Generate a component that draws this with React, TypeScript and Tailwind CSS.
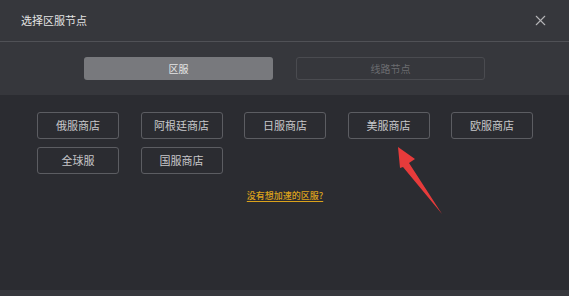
import { X } from 'lucide-react';

const regions = ['俄服商店', '阿根廷商店', '日服商店', '美服商店', '欧服商店', '全球服', '国服商店'];

export default function App() {
  return (
    <div
      className="relative w-[569px] h-[296px] flex flex-col bg-[#2b2c31] overflow-hidden"
      style={{ fontFamily: '"Noto Sans CJK SC", "Noto Sans", sans-serif' }}
    >
      {/* Header */}
      <div className="h-[42px] flex items-center justify-between pl-[21px] pr-[20px] bg-[#36373c] border-b border-[#505156]">
        <span className="text-[11px] text-[#e4e4e4]">选择区服节点</span>
        <X className="w-[17px] h-[17px] text-[#b5b5b8]" strokeWidth={1.5} />
      </div>

      {/* Tabs */}
      <div className="h-[53px] flex items-center justify-center gap-[23px] bg-[#36373c]">
        <button className="w-[189px] h-[23px] rounded-[3px] bg-[#78797d] text-[10px] text-[#e6e6e6]">
          区服
        </button>
        <button className="w-[189px] h-[23px] rounded-[3px] border border-[#4a4b50] text-[10px] text-[#6b6c70]">
          线路节点
        </button>
      </div>

      {/* Region list */}
      <div className="flex-1 flex flex-col pt-[17px]">
        <div className="grid grid-cols-[repeat(5,82px)] gap-x-[21.5px] gap-y-[8px] pl-[37px]">
          {regions.map((name) => (
            <button
              key={name}
              className="h-[27px] rounded-[3px] border border-[#5c5d62] text-[11px] text-[#c8c8ca]"
            >
              {name}
            </button>
          ))}
        </div>
        <div className="flex justify-center mt-[15px] pl-[1px]">
          <span className="text-[9px] font-medium text-[#dba21c] underline underline-offset-2">没有想加速的区服?</span>
        </div>
      </div>

      <div className="h-[6px] bg-[#37383d]" />

      {/* Red annotation arrow */}
      <svg className="absolute left-0 top-0 pointer-events-none" width="569" height="296">
        <path d="M398 147 L415 159 L409 163 L442 214 L403 167 L400 168 Z" fill="#e63b3b" />
      </svg>
    </div>
  );
}
